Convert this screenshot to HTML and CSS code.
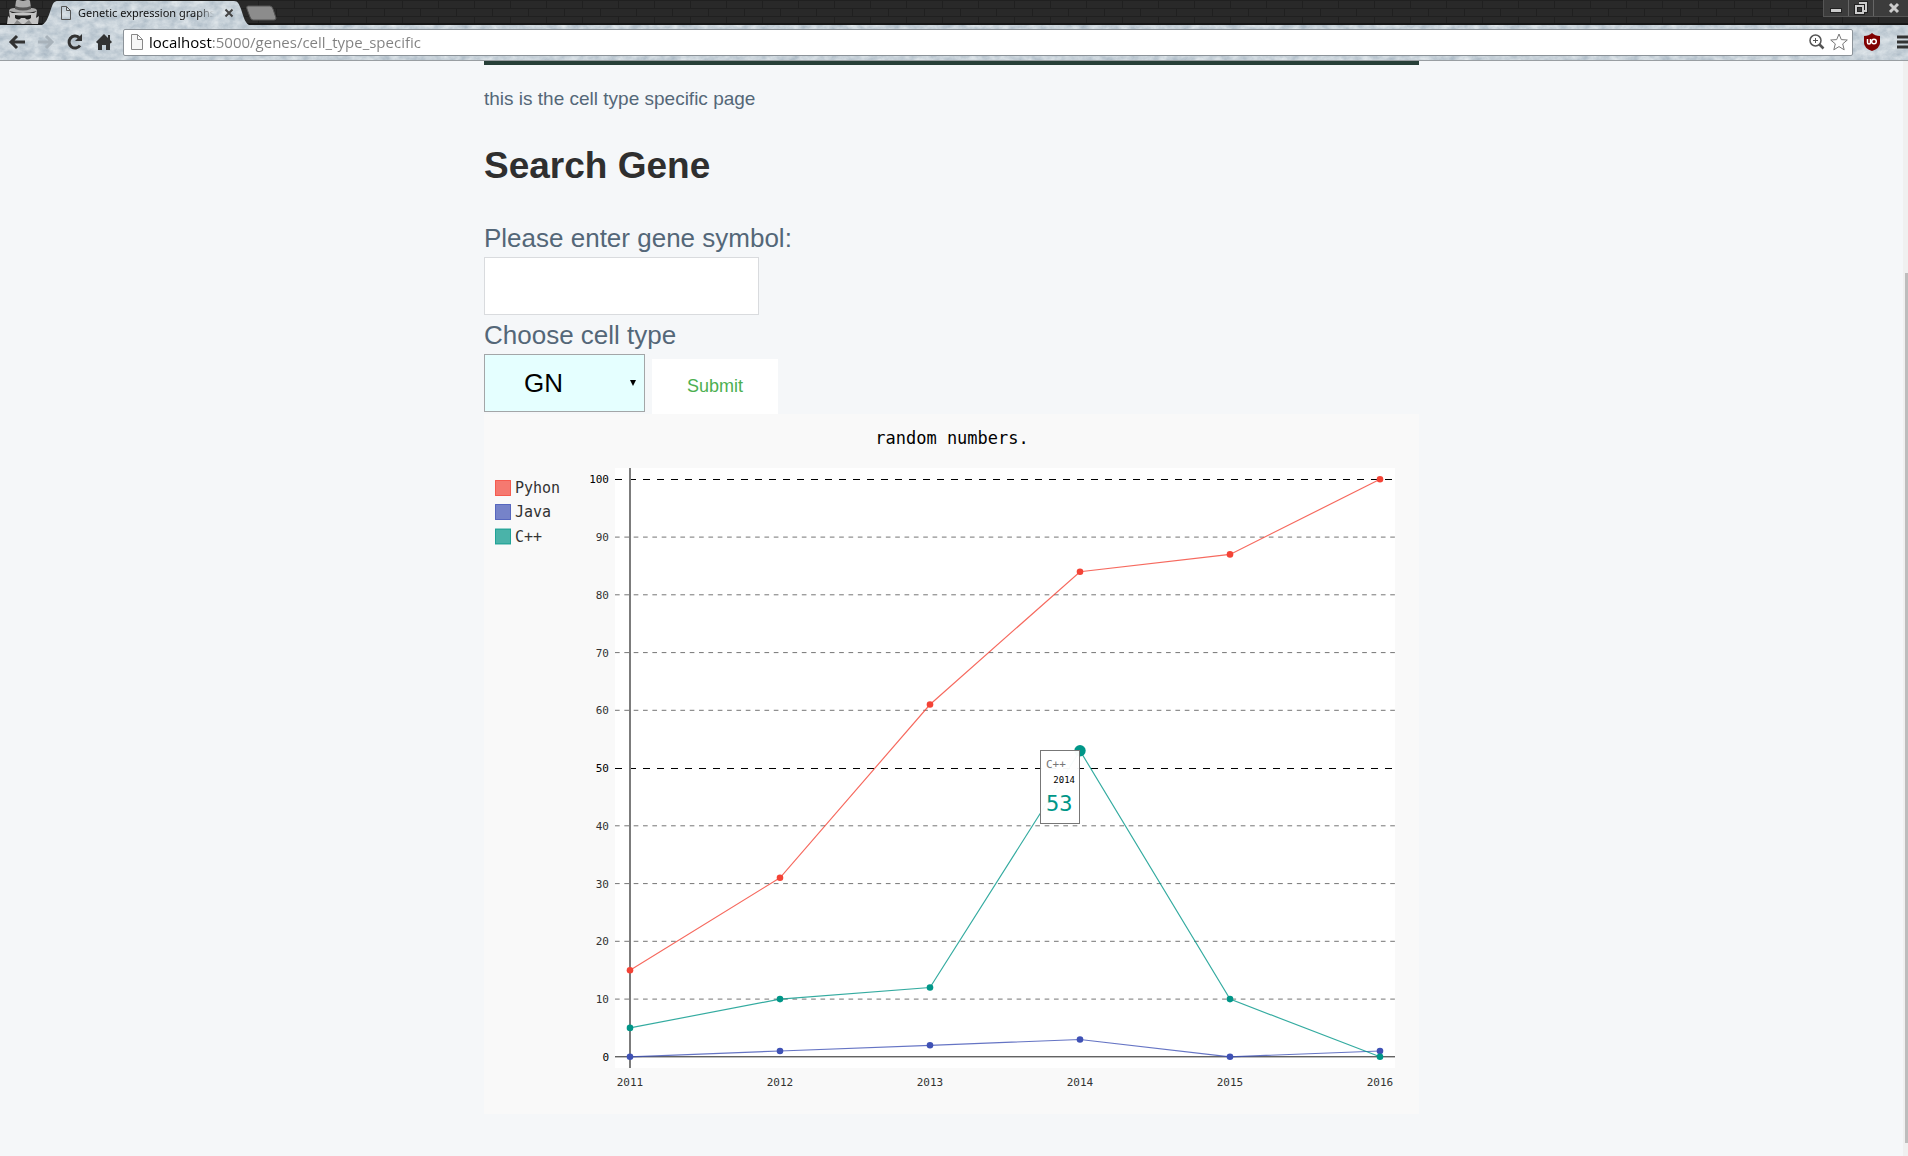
FILE: index.html
```html
<!DOCTYPE html>
<html lang="en">
<head>
<meta charset="utf-8">
<title>Genetic expression graphs</title>
<link rel="stylesheet" href="styles.css">
</head>
<body>
<div class="browser">
  <header class="chrome">
    <svg class="theme" aria-hidden="true">
      <defs>
        <filter id="ice" x="0" y="0" width="100%" height="100%" color-interpolation-filters="sRGB">
          <feTurbulence type="fractalNoise" baseFrequency="0.1 0.14" numOctaves="4" seed="8"/>
          <feColorMatrix values="0.28 0 0 0 0.64  0.24 0 0 0 0.7  0.2 0 0 0 0.75  0 0 0 0 1"/>
          <feComposite in2="SourceGraphic" operator="in"/>
        </filter>
        <pattern id="brick" width="36" height="16" patternUnits="userSpaceOnUse">
          <rect width="36" height="16" fill="#292929"/>
          <path d="M0 .5h36M0 8.5h36M6.5 0v8M24.5 8v8" stroke="#202020" fill="none"/>
        </pattern>
      </defs>
      <rect width="100%" height="24" fill="url(#brick)"/>
      <rect y="23" width="100%" height="2" fill="#171717"/>
      <g filter="url(#ice)">
        <rect y="25" width="100%" height="35"/>
        <path d="M40 26C46 24 48 18 51 9 53 3 54 1 58 1H234C238 1 239 4 241 9 244 18 245 24 251 26Z"/>
      </g>
      <path d="M248 6h22q2 0 3 3l3 9q0 2-2 2h-21q-2 0-3-3l-3-8q-1-3 1-3z" fill="#8c8c8c" stroke="#555"/>
    </svg>
    <div class="tabs">
      <svg class="incognito" viewBox="0 0 36 24" aria-hidden="true">
        <path d="M10 8 11 1q1-2 3-1l4 1 4-1q2-1 3 1l1 7q6 0 6 3-14 4-28 0 0-3 6-3z" fill="#aaa"/>
        <path d="M10 6q8 3 16 0v3q-8 3-16 0z" fill="#555"/>
        <path d="M7 13h22l3-2-1 7 3-2-1 8H2l1-8 2 2-1-7z" fill="#c5c5c5"/>
        <path d="M10 15q8 1 16 0v3q-4 3-6 0h-4q-2 3-6 0z" fill="#222"/>
        <path d="M12 20l5 4H9zM24 20l-5 4h8z" fill="#888"/>
      </svg>
      <svg class="tab-page" viewBox="0 0 12 14" aria-hidden="true"><path d="M1.500.5h5l4 4v9h-9zM6.500.5v4h4" fill="none" stroke="#555"/></svg>
      <span class="tab-title">Genetic expression graphs</span>
      <button class="tab-close" aria-label="Close tab"><svg viewBox="0 0 10 10"><path d="M1.500 1.500l7 7M8.500 1.500l-7 7" stroke="#444" stroke-width="2"/></svg></button>
      <div class="window-buttons">
        <button aria-label="Minimize"><svg viewBox="0 0 24 16"><rect x="6.500" y="8.500" width="11" height="4" fill="#ccc" stroke="#222"/></svg></button>
        <button aria-label="Restore"><svg viewBox="0 0 24 16"><path d="M10 3h7v8h-3M7 6h7v7H7z" fill="none" stroke="#222" stroke-width="4"/><path d="M10 3h7v8h-3M7 6h7v7H7z" fill="none" stroke="#ccc" stroke-width="2"/></svg></button>
        <button class="close" aria-label="Close"><svg viewBox="0 0 24 16"><path d="M4 4l8 8M12 4l-8 8" stroke="#ccc" stroke-width="3"/></svg></button>
      </div>
    </div>
    <div class="toolbar">
      <button class="nav" aria-label="Back"><svg viewBox="0 0 18 18"><path d="M17 9H3M9 3L3 9l6 6" fill="none" stroke="#333" stroke-width="3"/></svg></button>
      <button class="nav" aria-label="Forward"><svg viewBox="0 0 18 18"><path d="M1 9h14M9 3l6 6-6 6" fill="none" stroke="#a8b2ba" stroke-width="3"/></svg></button>
      <button class="nav" aria-label="Reload"><svg viewBox="0 0 18 18"><path d="M14 12.500A6 6 0 1 1 13 4.500" fill="none" stroke="#333" stroke-width="3"/><path d="M16 1v7H9z" fill="#333"/></svg></button>
      <button class="nav" aria-label="Home"><svg viewBox="0 0 18 18"><path d="M9 1l8 8-1.500 1.500L15 10v7h-4v-5H7v5H3v-7l-.5.5L1 9zM13 2h2v5l-2-2z" fill="#333"/></svg></button>
      <div class="omnibox">
        <svg class="page-icon" viewBox="0 0 12 16" aria-hidden="true"><path d="M.5.500h6l5 5v10H.5zM6.500.5v5h5" fill="#f6f6f6" stroke="#888"/></svg>
        <input class="url" type="text" aria-label="Address" value="localhost:5000/genes/cell_type_specific">
        <button class="small" aria-label="Zoom"><svg viewBox="0 0 16 16"><circle cx="6.500" cy="6.500" r="5.500" fill="none" stroke="#555" stroke-width="1.500"/><path d="M6.500 4v5M4 6.500h5" stroke="#555"/><path d="M10.500 10.500l4 4" stroke="#555" stroke-width="2.500"/></svg></button>
        <button class="star" aria-label="Bookmark"><svg viewBox="0 0 18 18"><path d="M9 1l2.300 5.600 6 .4-4.600 3.900 1.500 5.900L9 13.600l-5.200 3.200 1.500-5.900L.7 7l6-.4z" fill="#fff" stroke="#777"/></svg></button>
      </div>
      <button class="shield" aria-label="uBlock"><svg viewBox="0 0 18 20"><path d="M9 1q3 3 8 3v7q0 5-8 8-8-3-8-8V4q5 0 8-3z" fill="#800000"/><path d="M4.500 7v3.500q0 1.500 1.500 1.500t1.500-1.500V7" fill="none" stroke="#fff" stroke-width="1.500"/><circle cx="11" cy="9.500" r="2.300" fill="none" stroke="#fff" stroke-width="1.500"/></svg></button>
      <button class="menu" aria-label="Menu"><svg viewBox="0 0 11 14"><path d="M0 2h11M0 7h11M0 12h11" stroke="#333" stroke-width="3"/></svg></button>
    </div>
  </header>

  <div class="viewport">
    <main class="page">
      <div class="content">
        <p class="intro">this is the cell type specific page</p>
        <h2 class="heading">Search Gene</h2>
        <form class="search">
          <label class="label" for="gene">Please enter gene symbol:</label>
          <input class="gene" id="gene" type="text">
          <label class="label" for="cell">Choose cell type</label>
          <div class="row">
            <div class="pick">
              <select class="cell" id="cell"><option>GN</option></select>
              <svg class="arrow" viewBox="0 0 6 6" aria-hidden="true"><path d="M0 0h6L3 6z"/></svg>
            </div>
            <button class="submit" type="submit">Submit</button>
          </div>
        </form>
        <svg class="chart" viewBox="0 0 935 700" role="img" aria-label="random numbers.">
          <rect class="chart-bg" width="935" height="700"/>
          <rect class="plot-bg" x="131" y="54" width="780" height="600"/>
          <text class="title" x="468" y="30">random numbers.</text>
          <g class="legend">
            <rect class="s1" x="11.500" y="66.500" width="15" height="15"/><text x="31" y="79">Pyhon</text>
            <rect class="s2" x="11.500" y="90.500" width="15" height="15"/><text x="31" y="103">Java</text>
            <rect class="s3" x="11.500" y="115" width="15" height="15"/><text x="31" y="128">C++</text>
          </g>
          <g class="guides">
            <path class="major" d="M131 65.500H911M131 354.500H911"/>
            <path d="M131 123.100H911M131 180.800H911M131 238.600H911M131 296.300H911M131 411.800H911M131 469.600H911M131 527.300H911M131 585.100H911"/>
          </g>
          <path class="axis" d="M131 642.800H911"/>
          <path class="axis-y" d="M146 54V654"/>
          <g class="ylabels">
            <text class="strong" x="125" y="69">100</text><text x="125" y="127">90</text><text x="125" y="185">80</text><text x="125" y="243">70</text><text x="125" y="300">60</text><text class="strong" x="125" y="358">50</text><text x="125" y="416">40</text><text x="125" y="474">30</text><text x="125" y="531">20</text><text x="125" y="589">10</text><text class="strong" x="125" y="647">0</text>
          </g>
          <g class="xlabels">
            <text x="146" y="672">2011</text><text x="296" y="672">2012</text><text x="446" y="672">2013</text><text x="596" y="672">2014</text><text x="746" y="672">2015</text><text x="896" y="672">2016</text>
          </g>
          <g class="line s1">
            <polyline points="146,556.200 296,463.800 446,290.500 596,157.700 746,140.400 896,65.300"/>
            <circle cx="146" cy="556.200" r="3.300"/><circle cx="296" cy="463.800" r="3.300"/><circle cx="446" cy="290.500" r="3.300"/><circle cx="596" cy="157.700" r="3.300"/><circle cx="746" cy="140.400" r="3.300"/><circle cx="896" cy="65.300" r="3.300"/>
          </g>
          <g class="line s2">
            <polyline points="146,642.800 296,637 446,631.300 596,625.500 746,642.800 896,637"/>
            <circle cx="146" cy="642.800" r="3.300"/><circle cx="296" cy="637" r="3.300"/><circle cx="446" cy="631.300" r="3.300"/><circle cx="596" cy="625.500" r="3.300"/><circle cx="746" cy="642.800" r="3.300"/><circle cx="896" cy="637" r="3.300"/>
          </g>
          <g class="line s3">
            <polyline points="146,613.900 296,585.100 446,573.500 596,336.700 746,585.100 896,642.800"/>
            <circle cx="146" cy="613.900" r="3.300"/><circle cx="296" cy="585.100" r="3.300"/><circle cx="446" cy="573.500" r="3.300"/><circle cx="596" cy="336.700" r="5.700"/><circle cx="746" cy="585.100" r="3.300"/><circle cx="896" cy="642.800" r="3.300"/>
          </g>
          <g class="tip">
            <rect x="556.500" y="336.500" width="39" height="73"/>
            <text class="tip-name" x="562" y="354">C++</text>
            <text class="tip-year" x="591" y="369">2014</text>
            <text class="tip-value" x="562" y="397">53</text>
          </g>
        </svg>
      </div>
    </main>
    <div class="scrollbar" aria-hidden="true"><div class="thumb"></div></div>
  </div>
</div>
</body>
</html>
```
FILE: styles.css
```css
* { box-sizing: border-box; }
body {
  margin: 0;
  font-family: "Liberation Sans", Arial, sans-serif;
  background: #f5f7f9;
  color: #546778;
}
.browser { display: flex; flex-direction: column; min-height: 100vh; }
button { border: 0; padding: 0; background: none; display: block; }
button svg { display: block; width: 100%; height: 100%; }

/* Browser frame */
.chrome { position: relative; height: 61px; border-bottom: 1px solid #999ea2; overflow: hidden; }
.theme { position: absolute; inset: 0; width: 100%; height: 60px; }
.tabs, .toolbar { position: relative; display: flex; }
.tabs { height: 25px; align-items: flex-start; }
.incognito { width: 36px; height: 24px; margin-left: 5px; }
.tab-page { width: 12px; height: 14px; margin: 6px 6px 0 19px; }
.tab-title {
  width: 136px;
  font: 11px/26px "Noto Sans", sans-serif;
  color: #111;
  white-space: nowrap;
  overflow: hidden;
  -webkit-mask-image: linear-gradient(to right, #000 120px, transparent);
  mask-image: linear-gradient(to right, #000 120px, transparent);
}
.tab-close { width: 10px; height: 10px; margin: 8px 0 0 10px; }
.window-buttons { display: flex; margin-left: auto; height: 17px; background: #3c3c3c; border: 1px solid #555; border-top: 0; border-right: 0; }
.window-buttons button { width: 25px; border-right: 1px solid #666; }
.window-buttons .close { width: 34px; border: 0; }
.window-buttons .close svg { width: 24px; margin-left: 12px; }
.toolbar { height: 34px; align-items: center; padding-left: 8px; }
.nav { width: 18px; height: 18px; margin-right: 11px; }
.omnibox {
  flex: 1;
  display: flex;
  align-items: center;
  height: 27px;
  margin-left: -1px;
  padding: 0 4px 0 7px;
  background: #fff;
  border: 1px solid #8c9399;
  border-radius: 2px;
}
.page-icon { width: 12px; height: 16px; margin-right: 6px; }
.url {
  flex: 1;
  border: 0;
  padding: 0;
  height: 24px;
  font: 15px "Open Sans", sans-serif;
  background: linear-gradient(to right, #000 63px, #808080 63px);
  -webkit-background-clip: text;
  background-clip: text;
  -webkit-text-fill-color: transparent;
}
.small { width: 16px; height: 16px; margin-right: 5px; }
.star { width: 18px; height: 18px; }
.shield { width: 18px; height: 20px; margin: 0 16px 0 10px; }
.menu { width: 11px; height: 14px; }

/* Page */
.viewport { flex: 1; display: flex; }
.page { flex: 1; }
.content { max-width: 935px; margin: 0 auto; border-top: 4px solid #273f38; }
.intro { margin: 20px 0 29px; font-size: 19px; line-height: 28px; }
.heading { margin: 0 0 32px; font-size: 37px; line-height: 48px; color: #2f2f2f; }
.label { display: block; font-size: 26px; line-height: 32px; margin-bottom: 3px; }
.gene {
  display: block;
  width: 275px;
  height: 58px;
  margin-bottom: 4px;
  padding: 0 16px;
  border: 1px solid #d9dbde;
  background: #fff;
  font: 26px "Liberation Sans", Arial, sans-serif;
}
.row { display: flex; gap: 7px; height: 60px; }
.pick { position: relative; width: 161px; height: 58px; }
.cell {
  appearance: none;
  width: 100%;
  height: 100%;
  padding: 0 39px;
  border: 1px solid #a3a6a8;
  border-radius: 0;
  background: #e5ffff;
  color: #000;
  font: 26px "Liberation Sans", Arial, sans-serif;
}
.arrow { position: absolute; right: 9px; top: 26px; width: 6px; height: 6px; }
.submit {
  align-self: flex-end;
  width: 126px;
  height: 55px;
  background: #fff;
  color: #4caf50;
  font: 18px "Liberation Sans", Arial, sans-serif;
}

/* Chart */
.chart { display: block; width: 100%; height: auto; margin-bottom: 42px; font-family: "DejaVu Sans Mono", monospace; }
.chart-bg { fill: #f9f9f9; }
.plot-bg { fill: #fff; }
.title { font-size: 17px; text-anchor: middle; fill: #000; }
.legend text { font-size: 15px; fill: #333; }
.legend rect { fill-opacity: .7; }
.s1 { fill: #f44336; stroke: #f44336; }
.s2 { fill: #3f51b5; stroke: #3f51b5; }
.s3 { fill: #009688; stroke: #009688; }
.legend rect { stroke-opacity: .8; }
.legend text { stroke: none; }
.guides path { fill: none; stroke: #757575; stroke-dasharray: 4.670; }
.guides .major { stroke: #000; stroke-dasharray: 7; }
.axis { stroke: #222; }
.axis-y { stroke: #7c7c7c; stroke-width: 2; }
.ylabels, .xlabels { font-size: 11px; fill: #333; }
.ylabels { text-anchor: end; }
.xlabels { text-anchor: middle; }
.ylabels .strong { fill: #000; }
.line polyline { fill: none; stroke-opacity: .8; stroke-width: 1.170; }
.line circle { stroke: none; }
.tip rect { fill: #fff; fill-opacity: .96; stroke: #777; }
.tip-name { font-size: 11px; fill: #777; }
.tip-year { font-size: 9px; fill: #000; text-anchor: end; }
.tip-value { font-size: 22px; fill: #009688; }

/* Page scrollbar */
.scrollbar { flex: 0 0 5px; display: flex; flex-direction: column; background: #f0f0f0; }
.scrollbar::before { content: ""; flex: 212; }
.scrollbar::after { content: ""; flex: 13; }
.thumb { flex: 870; margin-left: 2px; background: #bdbdbd; }
```
